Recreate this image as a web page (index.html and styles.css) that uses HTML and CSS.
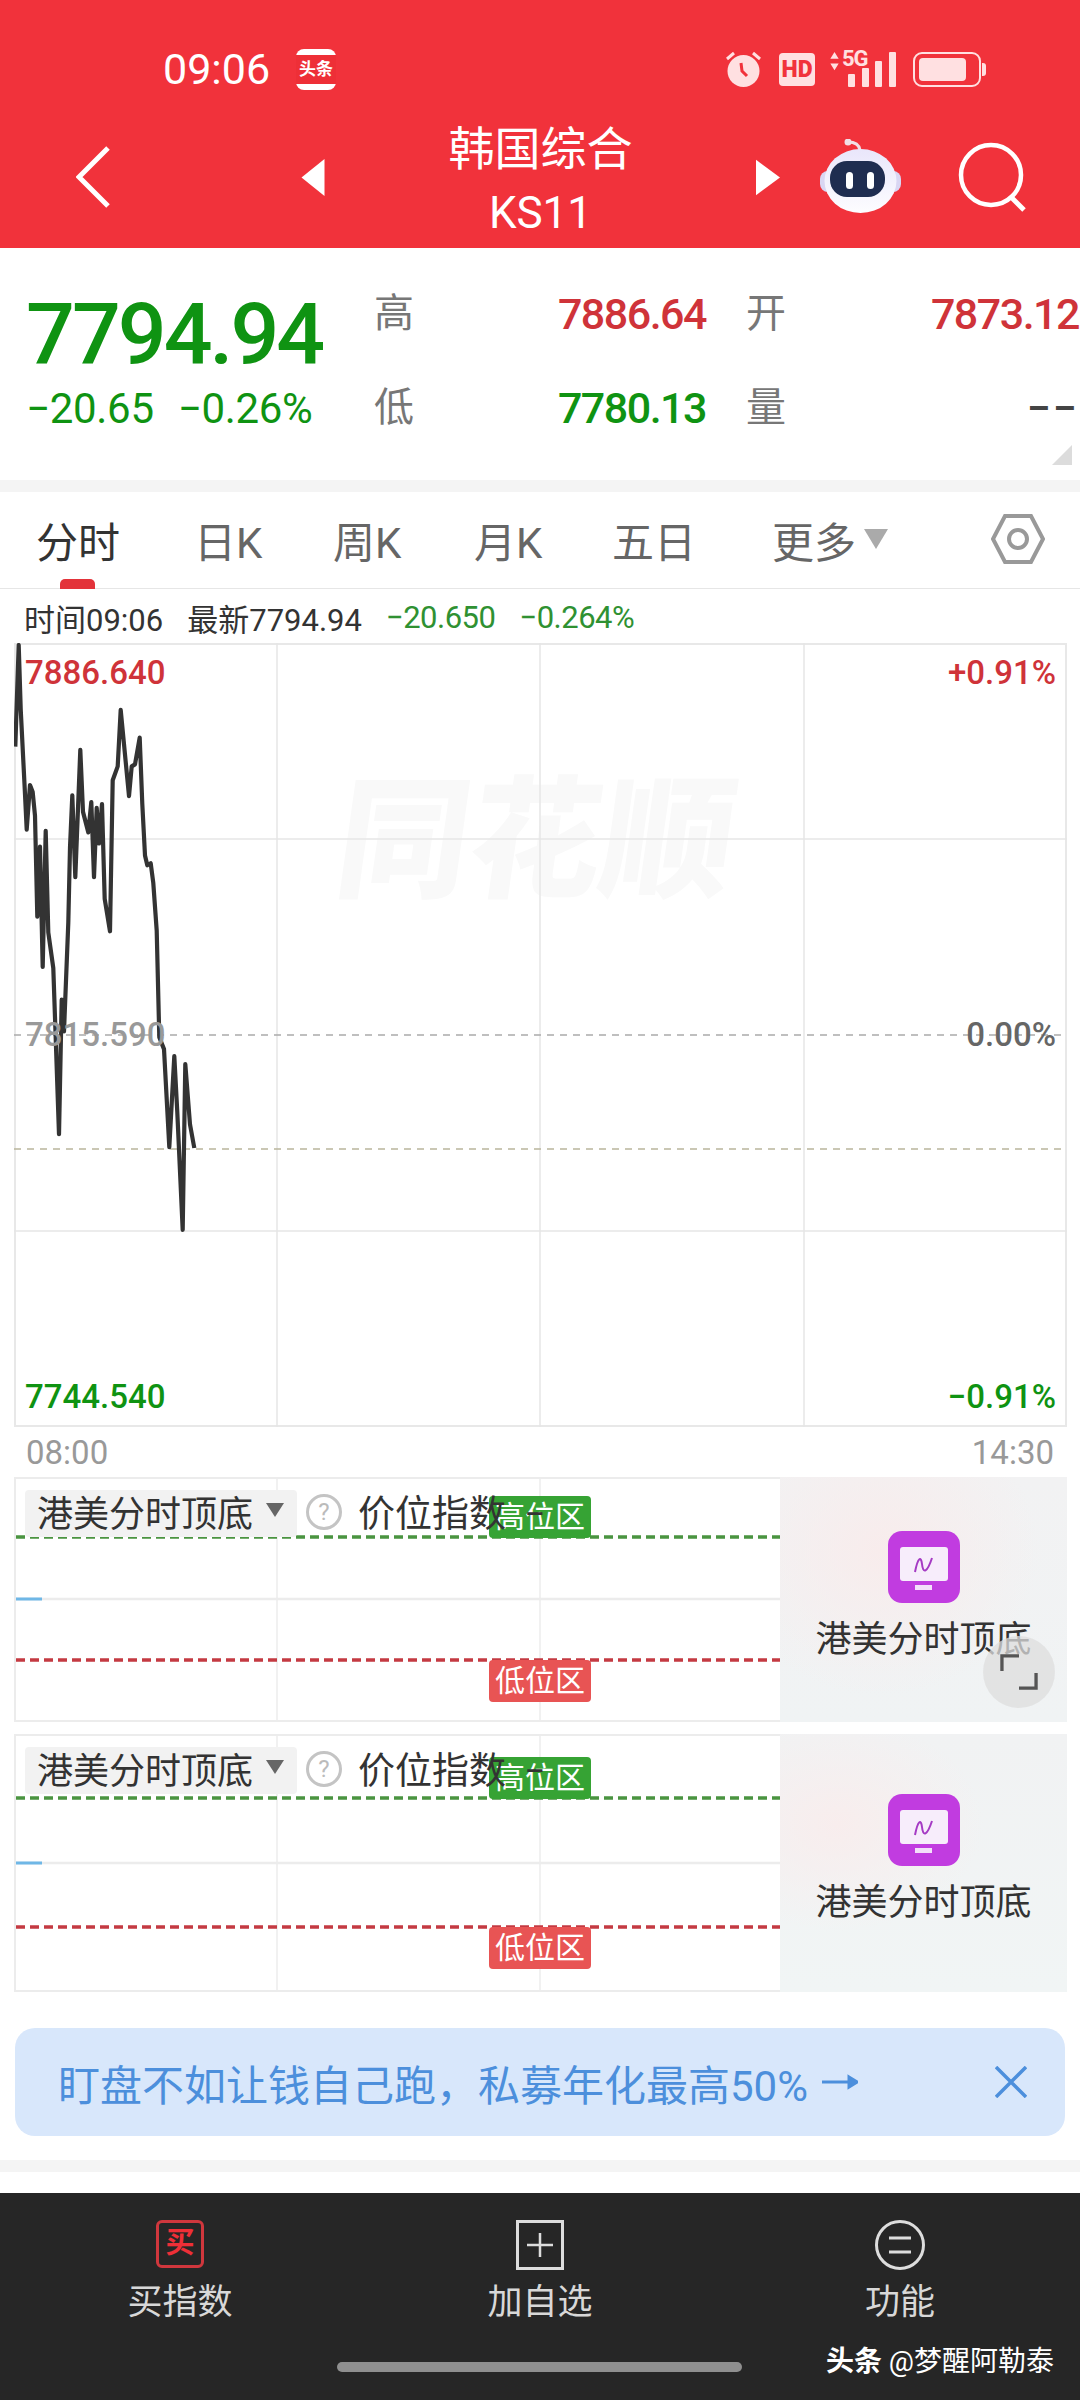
FILE: index.html
```html
<!DOCTYPE html>
<html lang="zh-CN">
<head>
    <meta charset="UTF-8">
    <meta name="viewport" content="width=device-width, initial-scale=1.0">
    <title>韩国综合 KS11</title>
    <link rel="stylesheet" href="styles.css">
</head>
<body>

<header class="top">
    <div class="status">
        <span class="clock">09:06</span>
        <span class="app-badge"><span>头条</span></span>
        <div class="status-icons">
            <svg class="alarm" viewBox="0 0 37 38">
                <path d="M2 9 9 3M35 9 28 3" stroke="#ffe0e1" stroke-width="3" fill="none"/>
                <circle cx="18.500" cy="21" r="16" fill="#ffe0e1"/>
                <path d="M16 13 17 21 22 26" stroke="#f1323b" stroke-width="3" fill="none"/>
            </svg>
            <span class="hd">HD</span>
            <div class="signal">
                <svg class="updown" viewBox="0 0 13 25"><path d="M6.500 0 12 9H1zM1 15H12L6.500 24z" fill="#ffe0e1"/></svg>
                <span class="five-g">5G</span>
                <div class="bars"><i class="bar-1"></i><i class="bar-2"></i><i class="bar-3"></i><i class="bar-4"></i></div>
            </div>
            <div class="battery"><div class="battery-fill"></div></div>
        </div>
    </div>
    <nav class="nav">
        <svg class="back" viewBox="0 0 34 62"><path d="M32 2 3 31 32 60" stroke="#fff" stroke-width="5" fill="none"/></svg>
        <svg class="tri" viewBox="0 0 23 37"><path d="M23 0V37L0 18.500z" fill="#fff"/></svg>
        <div class="title">
            <div class="title-name">韩国综合</div>
            <div class="title-code">KS11</div>
        </div>
        <svg class="tri" viewBox="0 0 25 37"><path d="M0 0V37L25 18.500z" fill="#fff"/></svg>
        <svg class="robot" viewBox="0 0 81 76">
            <defs>
                <linearGradient id="shell" x1="0" y1="0" x2="0" y2="1">
                    <stop offset="0" stop-color="#e9e6fb"/>
                    <stop offset="1" stop-color="#fdfdff"/>
                </linearGradient>
            </defs>
            <path d="M40 11C39 5 34 3 28 3" stroke="#f1dfe6" stroke-width="3" fill="none"/>
            <circle cx="28" cy="3" r="3.500" fill="#f1dfe6"/>
            <rect x="0" y="32" width="81" height="21" rx="8" fill="#d9d6f3"/>
            <ellipse cx="40.500" cy="42" rx="36" ry="32" fill="url(#shell)"/>
            <rect x="10" y="22" width="55" height="36" rx="17" fill="#1f2d50"/>
            <rect x="26" y="33" width="7" height="17" rx="3.500" fill="#fff"/>
            <rect x="47" y="33" width="7" height="17" rx="3.500" fill="#fff"/>
        </svg>
        <svg class="search" viewBox="0 0 68 70">
            <circle cx="33" cy="33" r="30" stroke="#fff" stroke-width="4.500" fill="none"/>
            <path d="M53 55 66 68" stroke="#fff" stroke-width="5" fill="none"/>
        </svg>
    </nav>
</header>

<section class="summary">
    <div class="price-box">
        <div class="price">7794.94</div>
        <div class="delta"><span>−20.65</span><span>−0.26%</span></div>
    </div>
    <div class="stats">
        <span class="stat-label">高</span><span class="stat-value up">7886.64</span>
        <span class="stat-label">开</span><span class="stat-value up">7873.12</span>
        <span class="stat-label">低</span><span class="stat-value down">7780.13</span>
        <span class="stat-label">量</span><span class="stat-value dash">−−</span>
    </div>
    <svg class="corner" viewBox="0 0 20 20"><path d="M20 0V20H0z" fill="#dcdcdc"/></svg>
</section>

<div class="band"></div>

<div class="tabs">
    <div class="tab active">分时</div>
    <div class="tab">日K</div>
    <div class="tab">周K</div>
    <div class="tab">月K</div>
    <div class="tab">五日</div>
    <div class="tab">更多<svg class="more-arrow" viewBox="0 0 24 20"><path d="M0 0H24L12 20z" fill="#aaa"/></svg></div>
    <svg class="hex" viewBox="0 0 54 50">
        <path d="M14 2H40L52 25 40 48H14L2 25z" stroke="#999" stroke-width="4" fill="none"/>
        <circle cx="27" cy="25" r="9" stroke="#999" stroke-width="4" fill="none"/>
    </svg>
</div>

<div class="info">
    <span>时间09:06</span>
    <span>最新7794.94</span>
    <span class="down-soft">−20.650</span>
    <span class="down-soft">−0.264%</span>
</div>

<div class="chart">
    <div class="watermark">同花顺</div>
    <svg class="chart-lines" viewBox="14 643 1053 784">
        <g stroke="#e6e6e6" stroke-width="1.500">
            <line x1="277" y1="643" x2="277" y2="1427"/>
            <line x1="540" y1="643" x2="540" y2="1427"/>
            <line x1="804" y1="643" x2="804" y2="1427"/>
            <line x1="14" y1="839" x2="1067" y2="839"/>
            <line x1="14" y1="1231" x2="1067" y2="1231"/>
        </g>
        <line x1="14" y1="1035" x2="1067" y2="1035" stroke="#aaa" stroke-width="1.500" stroke-dasharray="7 6"/>
        <line x1="14" y1="1149" x2="1067" y2="1149" stroke="#b9b59c" stroke-width="1.500" stroke-dasharray="7 6"/>
        <polyline fill="none" stroke="#333" stroke-width="4.200" stroke-linejoin="round" points="15.300,746.600 18.700,645 20.700,709 23.300,760.500 24.700,788.200 26.700,829.700 30,785 32.700,792.100 35,815.800 37.300,916.700 40,846.700 42.700,966.900 45.700,830.900 48.300,932.500 53.300,968.100 59,1134.100 61.700,999.700 64,1031.300 68.300,922.600 70,847.500 72.300,795.300 75.300,877.100 80.300,749.800 83,811.900 88.300,832.400 91.300,802 94,877.100 96.700,807.900 99,843.500 102,804 104.700,898.900 110,931.300 112.700,780.300 117.700,766.400 120.700,709.900 129,796.100 131.700,766.400 135,764.400 139.700,737.500 142.300,804 145,855.400 147.300,865.300 150.700,863.300 153.300,883.100 156.700,930.500 159.300,1037.300 164,1049.100 169.300,1147.200 174.300,1056.200 177.300,1112.400 182.700,1229.800 185.300,1064.100 190,1124.300 194.300,1148"/>
    </svg>
    <span class="axis axis-left axis-top up">7886.640</span>
    <span class="axis axis-right axis-top up">+0.91%</span>
    <span class="axis axis-left axis-mid gray">7815.590</span>
    <span class="axis axis-right axis-mid dim">0.00%</span>
    <span class="axis axis-left axis-bottom down">7744.540</span>
    <span class="axis axis-right axis-bottom down">−0.91%</span>
</div>

<div class="times"><span>08:00</span><span>14:30</span></div>

<div class="panel panel-first">
    <div class="panel-chart">
        <svg class="panel-lines" viewBox="0 0 764 241">
            <g stroke="#ececec" stroke-width="1.500">
                <line x1="261" y1="0" x2="261" y2="241"/>
                <line x1="524" y1="0" x2="524" y2="241"/>
            </g>
            <line x1="0" y1="120" x2="764" y2="120" stroke="#ececec" stroke-width="2.500"/>
            <line x1="0" y1="120" x2="26" y2="120" stroke="#6fb7e6" stroke-width="3"/>
            <line x1="0" y1="58" x2="764" y2="58" stroke="#4a9440" stroke-width="3.500" stroke-dasharray="9 5"/>
            <line x1="0" y1="181" x2="764" y2="181" stroke="#c43a42" stroke-width="3.500" stroke-dasharray="9 5"/>
        </svg>
        <span class="tag tag-high">高位区</span>
        <span class="tag tag-low">低位区</span>
        <div class="panel-head">
            <div class="picker"><span class="picker-name">港美分时顶底</span><svg class="picker-arrow" viewBox="0 0 18 14"><path d="M0 0H18L9 14z" fill="#666"/></svg></div>
            <svg class="help" viewBox="0 0 36 36">
                <circle cx="18" cy="18" r="16.500" stroke="#c4c4c4" stroke-width="3" fill="none"/>
                <text x="18" y="26" class="help-mark">?</text>
            </svg>
            <span class="index-name">价位指数&nbsp;&nbsp;−</span>
        </div>
    </div>
    <div class="tile tile-warm">
        <svg class="tile-icon" viewBox="0 0 72 72">
            <rect width="72" height="72" rx="14" fill="#c13ce0"/>
            <rect x="12" y="16" width="48" height="34" rx="3" fill="#f7edfb"/>
            <rect x="27" y="54" width="17" height="5" fill="#f3dffa"/>
            <path d="M27 41C30 26 33 25 34 33 35 43 39 42 44 27" stroke="#a53bc4" stroke-width="2" fill="none"/>
        </svg>
        <div class="tile-name">港美分时顶底</div>
    </div>
    <div class="expand">
        <svg viewBox="0 0 40 38"><path d="M2 18V2H20M38 20V36H20" stroke="#555" stroke-width="3.500" fill="none"/></svg>
    </div>
</div>

<div class="panel panel-second">
    <div class="panel-chart">
        <svg class="panel-lines" viewBox="0 0 764 254">
            <g stroke="#ececec" stroke-width="1.500">
                <line x1="261" y1="0" x2="261" y2="254"/>
                <line x1="524" y1="0" x2="524" y2="254"/>
            </g>
            <line x1="0" y1="127" x2="764" y2="127" stroke="#ececec" stroke-width="2.500"/>
            <line x1="0" y1="127" x2="26" y2="127" stroke="#6fb7e6" stroke-width="3"/>
            <line x1="0" y1="62" x2="764" y2="62" stroke="#4a9440" stroke-width="3.500" stroke-dasharray="9 5"/>
            <line x1="0" y1="191" x2="764" y2="191" stroke="#c43a42" stroke-width="3.500" stroke-dasharray="9 5"/>
        </svg>
        <span class="tag tag-high">高位区</span>
        <span class="tag tag-low">低位区</span>
        <div class="panel-head">
            <div class="picker"><span class="picker-name">港美分时顶底</span><svg class="picker-arrow" viewBox="0 0 18 14"><path d="M0 0H18L9 14z" fill="#666"/></svg></div>
            <svg class="help" viewBox="0 0 36 36">
                <circle cx="18" cy="18" r="16.500" stroke="#c4c4c4" stroke-width="3" fill="none"/>
                <text x="18" y="26" class="help-mark">?</text>
            </svg>
            <span class="index-name">价位指数&nbsp;&nbsp;−</span>
        </div>
    </div>
    <div class="tile tile-cool">
        <svg class="tile-icon" viewBox="0 0 72 72">
            <rect width="72" height="72" rx="14" fill="#c13ce0"/>
            <rect x="12" y="16" width="48" height="34" rx="3" fill="#f7edfb"/>
            <rect x="27" y="54" width="17" height="5" fill="#f3dffa"/>
            <path d="M27 41C30 26 33 25 34 33 35 43 39 42 44 27" stroke="#a53bc4" stroke-width="2" fill="none"/>
        </svg>
        <div class="tile-name">港美分时顶底</div>
    </div>
</div>

<div class="promo">
    <span class="promo-text">盯盘不如让钱自己跑，私募年化最高50%</span>
    <svg class="promo-arrow" viewBox="0 0 36 16"><path d="M0 8H32M27 3 35 8 27 13z" stroke="#4c8fdc" stroke-width="3" fill="#4c8fdc"/></svg>
    <svg class="promo-close" viewBox="0 0 32 32"><path d="M1 1 31 31M31 1 1 31" stroke="#4c8fdc" stroke-width="3.500" fill="none"/></svg>
</div>

<div class="band band-low"></div>

<footer class="bottom">
    <div class="actions">
        <div class="action">
            <div class="buy-icon">买</div>
            <div>买指数</div>
        </div>
        <div class="action">
            <svg class="action-icon" viewBox="0 0 48 50">
                <rect x="1.500" y="1.500" width="45" height="47" fill="none" stroke="#ddd" stroke-width="3"/>
                <path d="M24 13V37M11 25H37" stroke="#ddd" stroke-width="2.500"/>
            </svg>
            <div>加自选</div>
        </div>
        <div class="action">
            <svg class="action-icon" viewBox="0 0 50 50">
                <circle cx="25" cy="25" r="23.500" fill="none" stroke="#ddd" stroke-width="3"/>
                <path d="M14 18H36M14 32H36" stroke="#ddd" stroke-width="3"/>
            </svg>
            <div>功能</div>
        </div>
    </div>
    <div class="home-bar"></div>
    <div class="credit"><b>头条</b> @梦醒阿勒泰</div>
</footer>

</body>
</html>
```

FILE: styles.css
```css
* {
    box-sizing: border-box;
}

body {
    font-family: 'Roboto', 'Noto Sans CJK SC', sans-serif;
    margin: 0;
    width: 1080px;
    height: 2400px;
    overflow: hidden;
    background: #fff;
    color: #333;
}

.up {
    color: #cf3339;
}

.down {
    color: #0f9312;
}

.gray {
    color: #999;
}

.dim {
    color: #666;
}

/* red header */

.top {
    height: 248px;
    background: #f1323b;
    color: #fff;
}

.status {
    height: 118px;
    padding: 20px 99px 0 163px;
    display: flex;
    align-items: center;
}

.clock {
    font-size: 43px;
    width: 133px;
}

.app-badge {
    width: 40px;
    height: 41px;
    border-radius: 8px;
    background: #fff;
    display: flex;
    align-items: center;
    justify-content: center;
}

.app-badge span {
    display: block;
    width: 100%;
    height: 29px;
    line-height: 29px;
    background: #ee2f37;
    font-size: 17px;
    font-weight: 700;
    text-align: center;
}

.status-icons {
    margin-left: auto;
    display: flex;
    align-items: center;
}

.alarm {
    width: 37px;
    height: 38px;
}

.hd {
    width: 36px;
    height: 33px;
    margin-left: 17px;
    border-radius: 4px;
    background: #ffe0e1;
    color: #f1323b;
    font-size: 23px;
    font-weight: 900;
    line-height: 33px;
    text-align: center;
}

.signal {
    position: relative;
    width: 70px;
    height: 36px;
    margin-left: 13px;
}

.updown {
    position: absolute;
    left: 1px;
    top: 1px;
    width: 11px;
    height: 19px;
}

.five-g {
    position: absolute;
    left: 14px;
    top: -3px;
    font-size: 22px;
    line-height: 22px;
    font-weight: 700;
    color: #ffe0e1;
    letter-spacing: -1px;
}

.bars i {
    position: absolute;
    bottom: 0;
    width: 7px;
    border-radius: 1px;
    background: #ffe0e1;
}

.bar-1 {
    left: 20px;
    height: 13px;
}

.bar-2 {
    left: 34px;
    height: 19px;
}

.bar-3 {
    left: 47px;
    height: 26px;
}

.bar-4 {
    left: 61px;
    height: 35px;
}

.battery {
    position: relative;
    width: 68px;
    height: 35px;
    margin-left: 15px;
    border: 2px solid #ffe0e1;
    border-radius: 9px;
    padding: 4px;
}

.battery::after {
    content: "";
    position: absolute;
    right: -7px;
    top: 9px;
    width: 4px;
    height: 13px;
    border-radius: 0 3px 3px 0;
    background: #ffe0e1;
}

.battery-fill {
    width: 47px;
    height: 100%;
    border-radius: 4px;
    background: #ffe0e1;
}

.nav {
    height: 118px;
    padding-left: 76px;
    display: flex;
    align-items: center;
}

.back {
    width: 34px;
    height: 62px;
    margin-right: 191px;
}

.tri {
    width: 24px;
    height: 37px;
}

.title {
    width: 431px;
    height: 128px;
    margin-top: 8px;
    text-align: center;
}

.title-name {
    font-size: 46px;
    line-height: 64px;
}

.title-code {
    font-size: 44px;
    line-height: 64px;
}

.robot {
    width: 81px;
    height: 76px;
    margin-left: 40px;
}

.search {
    width: 68px;
    height: 70px;
    margin-left: 57px;
}

/* price summary */

.summary {
    position: relative;
    height: 232px;
    padding: 19px 0 0 26px;
    display: flex;
}

.price-box {
    width: 348px;
    padding-top: 21px;
}

.price {
    font-size: 86px;
    line-height: 94px;
    font-weight: 500;
    color: #0f9312;
    letter-spacing: -3px;
}

.delta {
    display: flex;
    gap: 24px;
    font-size: 42px;
    line-height: 54px;
    letter-spacing: -0.300px;
    color: #0f9312;
}

.stats {
    display: grid;
    grid-template-columns: 40px 292px 80px 293px;
    grid-auto-rows: 94px;
}

.stat-label {
    font-size: 40px;
    line-height: 94px;
    color: #777;
}

.stat-label:nth-child(4n + 3) {
    margin-left: 40px;
}

.stat-value {
    font-size: 43px;
    line-height: 94px;
    font-weight: 500;
    text-align: right;
    letter-spacing: -1.500px;
}

.stat-value.dash {
    color: #444;
    letter-spacing: 2px;
}

.corner {
    position: absolute;
    right: 8px;
    top: 197px;
    width: 20px;
    height: 20px;
}

.band {
    height: 12px;
    background: #f4f4f4;
}

/* tabs */

.tabs {
    height: 97px;
    padding: 0 0 2px 36px;
    border-bottom: 1px solid #e6e6e6;
    display: grid;
    grid-template-columns: 158px 139px 141px 138px 160px 219px 54px;
    align-items: center;
    font-size: 42px;
    color: #666;
}

.tab {
    position: relative;
    display: flex;
    align-items: center;
}

.tab.active {
    color: #333;
}

.tab.active::after {
    content: "";
    position: absolute;
    left: 24px;
    top: 70px;
    width: 35px;
    height: 10px;
    border-radius: 5px 5px 0 0;
    background: #e3333a;
}

.more-arrow {
    width: 24px;
    height: 20px;
    margin-left: 8px;
}

.hex {
    width: 54px;
    height: 50px;
}

/* quote line */

.info {
    height: 54px;
    padding: 2px 0 0 24px;
    display: flex;
    align-items: center;
    gap: 24px;
    font-size: 31px;
    color: #333;
}

.down-soft {
    color: #2f9132;
    letter-spacing: -0.500px;
}

/* main chart */

.chart {
    position: relative;
    width: 1053px;
    height: 784px;
    margin-left: 14px;
    border: 2px solid #e8e8e8;
}

.chart-lines {
    position: absolute;
    left: -2px;
    top: -2px;
    width: 1053px;
    height: 784px;
}

.watermark {
    position: absolute;
    left: 322px;
    top: 122px;
    font-size: 132px;
    line-height: 150px;
    font-weight: 900;
    color: #f9f9f9;
    transform: skewX(-8deg);
    white-space: nowrap;
}

.axis {
    position: absolute;
    font-size: 33px;
    line-height: 40px;
    font-weight: 500;
}

.axis-left {
    left: 9px;
}

.axis-right {
    right: 9px;
}

.axis-top {
    top: 8px;
}

.axis-mid {
    top: 370px;
}

.axis-bottom {
    top: 732px;
}

.times {
    height: 50px;
    padding: 0 26px;
    display: flex;
    align-items: center;
    justify-content: space-between;
    font-size: 33px;
    color: #999;
}

/* indicator panels */

.panel {
    position: relative;
    width: 1053px;
    margin: 0 0 12px 14px;
    border: 2px solid #ececec;
    display: flex;
}

.panel-first {
    height: 245px;
}

.panel-second {
    height: 258px;
}

.panel-chart {
    position: relative;
    width: 764px;
    padding: 9px 0 0 9px;
}

.panel-lines {
    position: absolute;
    left: 0;
    top: 0;
    width: 764px;
    height: 100%;
}

.panel-head {
    position: relative;
    display: flex;
    align-items: center;
    font-size: 36px;
    color: #333;
}

.picker {
    width: 272px;
    height: 47px;
    padding-left: 12px;
    border-radius: 4px;
    background: #f2f2f2;
    display: flex;
    align-items: center;
}

.picker-name {
    margin-top: -4px;
}

.picker-arrow {
    width: 18px;
    height: 14px;
    margin-left: 13px;
    margin-top: -6px;
}

.help {
    width: 36px;
    height: 36px;
    margin-left: 9px;
    margin-top: -2px;
}

.help-mark {
    font-size: 24px;
    fill: #bbb;
    text-anchor: middle;
}

.index-name {
    margin-left: 16px;
    margin-top: -4px;
    font-size: 37px;
    white-space: nowrap;
}

.tag {
    position: absolute;
    left: 473px;
    width: 102px;
    height: 42px;
    border-radius: 4px;
    font-size: 30px;
    line-height: 42px;
    text-align: center;
    color: #fff;
}

.tag-high {
    background: #36a334;
}

.tag-low {
    background: #e85454;
}

.panel-first .tag-high {
    top: 17px;
}

.panel-first .tag-low {
    top: 181px;
}

.panel-second .tag-high {
    top: 21px;
}

.panel-second .tag-low {
    top: 191px;
}

.tile {
    flex: 1;
    padding-bottom: 4px;
    display: flex;
    flex-direction: column;
    align-items: center;
    justify-content: center;
    margin: -2px -2px -2px 0;
}

.tile-warm {
    background:
        radial-gradient(ellipse at 35% 30%, #f8ecec, transparent 60%),
        linear-gradient(#f2f2f3, #f0f3f4);
}

.tile-cool {
    background:
        radial-gradient(ellipse at 20% 35%, #f8eded, transparent 45%),
        linear-gradient(#f1f2f3, #f1f5f5);
}

.tile-icon {
    width: 72px;
    height: 72px;
}

.tile-name {
    margin-top: 12px;
    font-size: 36px;
    line-height: 50px;
    color: #333;
}

.expand {
    position: absolute;
    left: 967px;
    top: 157px;
    width: 72px;
    height: 72px;
    border-radius: 50%;
    background: rgba(222, 222, 222, 0.75);
    display: flex;
    align-items: center;
    justify-content: center;
}

.expand svg {
    width: 38px;
    height: 36px;
}

/* promo banner */

.promo {
    width: 1050px;
    height: 108px;
    margin: 36px 0 24px 15px;
    padding-left: 43px;
    border-radius: 20px;
    background: #d8e7fb;
    display: flex;
    align-items: center;
    font-size: 42px;
    color: #4c8fdc;
}

.promo-text {
    white-space: nowrap;
}

.promo-arrow {
    width: 36px;
    height: 16px;
    margin-left: 14px;
}

.promo-close {
    width: 32px;
    height: 32px;
    margin-left: auto;
    margin-right: 38px;
}

.band-low {
    margin-bottom: 21px;
}

/* dark action bar */

.bottom {
    position: relative;
    height: 207px;
    padding-top: 27px;
    background: #262626;
    color: #d8d8d8;
}

.actions {
    display: grid;
    grid-template-columns: repeat(3, 360px);
    font-size: 35px;
    text-align: center;
}

.action {
    display: flex;
    flex-direction: column;
    align-items: center;
    gap: 10px;
    line-height: 50px;
}

.buy-icon {
    width: 48px;
    height: 48px;
    border: 3px solid #d0373d;
    border-radius: 6px;
    color: #ee2f37;
    font-size: 29px;
    font-weight: 700;
    line-height: 40px;
}

.action-icon {
    width: 50px;
    height: 50px;
    margin-bottom: -2px;
}

.home-bar {
    width: 405px;
    height: 10px;
    margin: 34px 0 0 337px;
    border-radius: 5px;
    background: #8f8f8f;
}

.credit {
    position: absolute;
    right: 26px;
    top: 149px;
    font-size: 28px;
    line-height: 40px;
    color: #fff;
    white-space: nowrap;
}
```
